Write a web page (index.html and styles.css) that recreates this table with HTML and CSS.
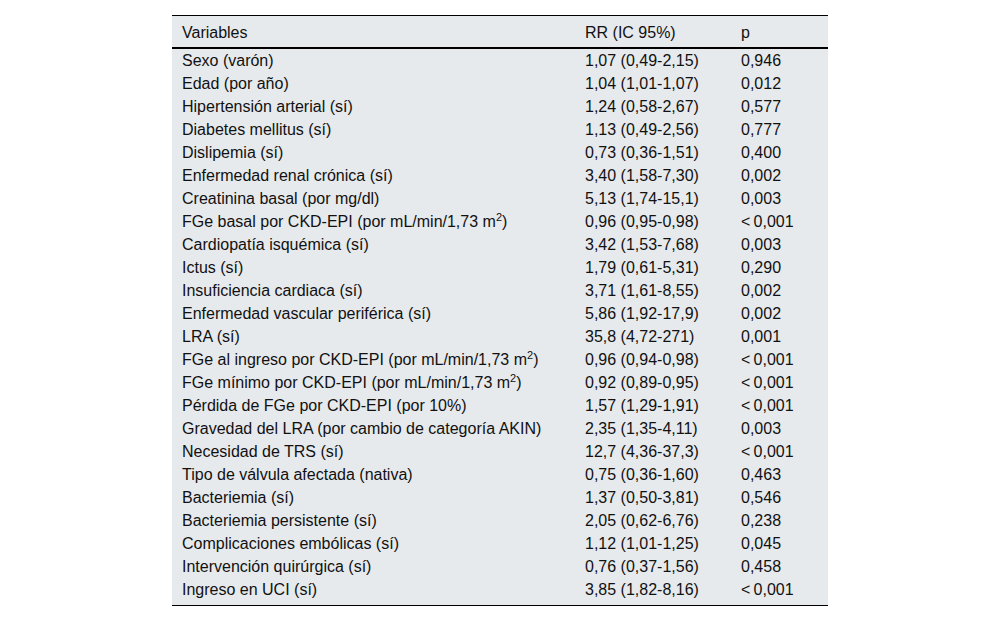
FILE: index.html
```html
<!DOCTYPE html>
<html lang="es">
<head>
<meta charset="utf-8">
<title>Tabla</title>
<link rel="stylesheet" href="styles.css">
</head>
<body>
<div class="page">
<table class="data">
<colgroup><col class="c1"><col class="c2"><col class="c3"></colgroup>
<thead>
<tr><th>Variables</th><th>RR (IC 95%)</th><th>p</th></tr>
</thead>
<tbody>
<tr><td>Sexo (varón)</td><td>1,07 (0,49-2,15)</td><td>0,946</td></tr>
<tr><td>Edad (por año)</td><td>1,04 (1,01-1,07)</td><td>0,012</td></tr>
<tr><td>Hipertensión arterial (sí)</td><td>1,24 (0,58-2,67)</td><td>0,577</td></tr>
<tr><td>Diabetes mellitus (sí)</td><td>1,13 (0,49-2,56)</td><td>0,777</td></tr>
<tr><td>Dislipemia (sí)</td><td>0,73 (0,36-1,51)</td><td>0,400</td></tr>
<tr><td>Enfermedad renal crónica (sí)</td><td>3,40 (1,58-7,30)</td><td>0,002</td></tr>
<tr><td>Creatinina basal (por mg/dl)</td><td>5,13 (1,74-15,1)</td><td>0,003</td></tr>
<tr><td>FGe basal por CKD-EPI (por mL/min/1,73 m<sup>2</sup>)</td><td>0,96 (0,95-0,98)</td><td>&lt;&#8201;0,001</td></tr>
<tr><td>Cardiopatía isquémica (sí)</td><td>3,42 (1,53-7,68)</td><td>0,003</td></tr>
<tr><td>Ictus (sí)</td><td>1,79 (0,61-5,31)</td><td>0,290</td></tr>
<tr><td>Insuficiencia cardiaca (sí)</td><td>3,71 (1,61-8,55)</td><td>0,002</td></tr>
<tr><td>Enfermedad vascular periférica (sí)</td><td>5,86 (1,92-17,9)</td><td>0,002</td></tr>
<tr><td>LRA (sí)</td><td>35,8 (4,72-271)</td><td>0,001</td></tr>
<tr><td>FGe al ingreso por CKD-EPI (por mL/min/1,73 m<sup>2</sup>)</td><td>0,96 (0,94-0,98)</td><td>&lt;&#8201;0,001</td></tr>
<tr><td>FGe mínimo por CKD-EPI (por mL/min/1,73 m<sup>2</sup>)</td><td>0,92 (0,89-0,95)</td><td>&lt;&#8201;0,001</td></tr>
<tr><td>Pérdida de FGe por CKD-EPI (por 10%)</td><td>1,57 (1,29-1,91)</td><td>&lt;&#8201;0,001</td></tr>
<tr><td>Gravedad del LRA (por cambio de categoría AKIN)</td><td>2,35 (1,35-4,11)</td><td>0,003</td></tr>
<tr><td>Necesidad de TRS (sí)</td><td>12,7 (4,36-37,3)</td><td>&lt;&#8201;0,001</td></tr>
<tr><td>Tipo de válvula afectada (nativa)</td><td>0,75 (0,36-1,60)</td><td>0,463</td></tr>
<tr><td>Bacteriemia (sí)</td><td>1,37 (0,50-3,81)</td><td>0,546</td></tr>
<tr><td>Bacteriemia persistente (sí)</td><td>2,05 (0,62-6,76)</td><td>0,238</td></tr>
<tr><td>Complicaciones embólicas (sí)</td><td>1,12 (1,01-1,25)</td><td>0,045</td></tr>
<tr><td>Intervención quirúrgica (sí)</td><td>0,76 (0,37-1,56)</td><td>0,458</td></tr>
<tr class="last"><td>Ingreso en UCI (sí)</td><td>3,85 (1,82-8,16)</td><td>&lt;&#8201;0,001</td></tr>
</tbody>
</table>
</div>
</body>
</html>
```
FILE: styles.css
```css
html, body {
  margin: 0;
  padding: 0;
  background: #ffffff;
}
.page {
  padding-top: 15px;
  padding-left: 172px;
}
.data {
  border-collapse: collapse;
  width: 656px;
  table-layout: fixed;
  background: #e7eaed;
  font-family: "Liberation Sans", Arial, sans-serif;
  font-size: 16px;
  color: #111111;
  border-top: 1px solid #000000;
  border-bottom: 1px solid #000000;
}
.c1 { width: 403px; }
.c2 { width: 156px; }
.c3 { width: 97px; }
.data th {
  font-weight: normal;
  text-align: left;
  height: 30px;
  padding: 1px 0 0 10px;
  line-height: 29px;
  border-bottom: 2px solid #000000;
  vertical-align: middle;
}
.data td {
  height: 23px;
  line-height: 23px;
  padding: 0 0 0 10px;
  vertical-align: middle;
  white-space: nowrap;
}
.data tr.last td {
  height: 27px;
  line-height: 23px;
  vertical-align: top;
}
.data sup {
  font-size: 11px;
  line-height: 0;
  vertical-align: 6px;
}
```
